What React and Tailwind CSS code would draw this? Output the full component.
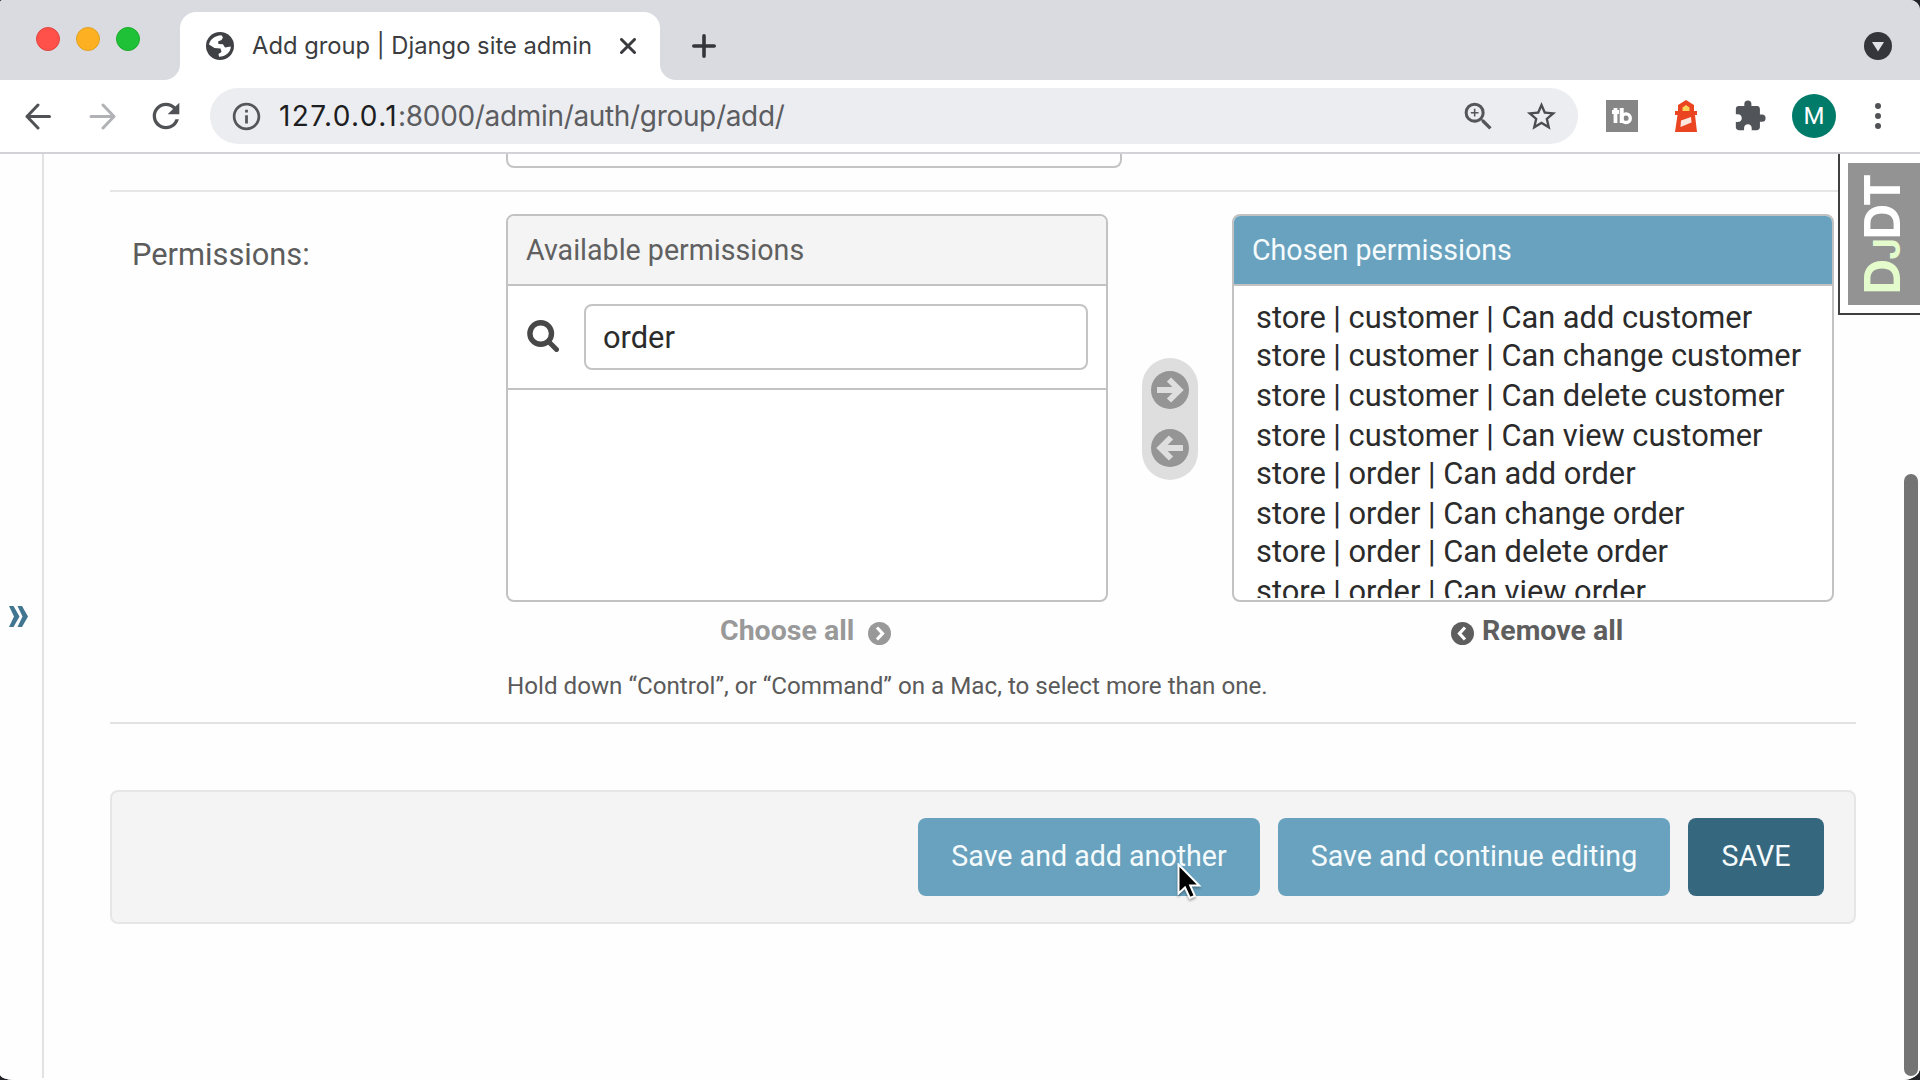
import React from 'react';
import { MdRefresh, MdInfoOutline, MdZoomIn, MdStarBorder, MdExtension } from 'react-icons/md';

const CHOSEN = [
  ['store | customer | Can add customer', 'h-[38px]'],
  ['store | customer | Can change customer', 'h-[40px]'],
  ['store | customer | Can delete customer', 'h-[40px]'],
  ['store | customer | Can view customer', 'h-[38px]'],
  ['store | order | Can add order', 'h-[40px]'],
  ['store | order | Can change order', 'h-[38px]'],
  ['store | order | Can delete order', 'h-[40px]'],
  ['store | order | Can view order', 'h-[40px]'],
];

function TabStrip() {
  return (
    <div className="flex h-20 shrink-0 items-start bg-[#dadbe0]">
      <div className="flex w-[180px] shrink-0 items-center gap-4 pt-[27px] pl-9">
        <span className="size-6 rounded-full border border-[#e0443e] bg-[#ff5149]" />
        <span className="size-6 rounded-full border border-[#dea123] bg-[#fdb022]" />
        <span className="size-6 rounded-full border border-[#1aab29] bg-[#1fc136]" />
      </div>
      <div className="relative mt-3 flex h-[68px] w-[480px] shrink-0 items-center rounded-t-2xl bg-white pl-[26px] pb-px">
        <span className="absolute bottom-0 -left-4 size-4 bg-[radial-gradient(circle_at_0_0,#dadbe0_15.5px,#fff_16.5px)]" />
        <span className="absolute -right-4 bottom-0 size-4 bg-[radial-gradient(circle_at_100%_0,#dadbe0_15.5px,#fff_16.5px)]" />
        <svg className="size-7 shrink-0" viewBox="0 0 28 28">
          <circle cx="14" cy="14" r="14" fill="#404145" />
          <path
            d="M3 12.500C4 7.500 8.500 3.500 15.500 3.200L17 5.500 15.500 8 12 9.500 12.500 12 17 12.300 19 15.500 24.800 14.500C24.800 20 19.500 24.800 13 24.800L12.500 22 15.500 20 14.500 16.500 8.500 16 3 12.500Z"
            fill="#fff"
          />
        </svg>
        <span className="ml-[18px] w-[340px] shrink-0 whitespace-nowrap font-['Inter',sans-serif] text-[23.75px] leading-8 text-[#3c3d41]">
          Add group | Django site admin
        </span>
        <svg className="ml-[28px] size-4 shrink-0" viewBox="0 0 16 16" fill="none" stroke="#3a3b3f" strokeWidth="3" strokeLinecap="round">
          <path d="M1.5 1.5l13 13M14.5 1.5l-13 13" />
        </svg>
      </div>
      <svg className="mt-[34px] ml-8 size-6 shrink-0" viewBox="0 0 24 24" fill="none" stroke="#35363b" strokeWidth="3.6" strokeLinecap="round">
        <path d="M12 1.8v20.4M1.8 12h20.4" />
      </svg>
      <svg className="mt-8 mr-7 ml-auto size-7 shrink-0" viewBox="0 0 28 28">
        <circle cx="14" cy="14" r="14" fill="#35363b" />
        <path d="M8 10h12l-6 9.5z" fill="#e2e3e7" />
      </svg>
    </div>
  );
}

function Toolbar() {
  return (
    <div className="flex h-[74px] shrink-0 items-center border-b-2 border-[#d2d3d7] bg-white">
      <svg className="ml-[25px] size-[27px] shrink-0" viewBox="0 0 27 27" fill="none" stroke="#515256" strokeWidth="3" strokeLinecap="round" strokeLinejoin="round">
        <path d="M24.5 13.5H3M13 2L2 13.5 13 25" />
      </svg>
      <svg className="ml-[37px] size-[27px] shrink-0" viewBox="0 0 27 27" fill="none" stroke="#b1b2b5" strokeWidth="3" strokeLinecap="round" strokeLinejoin="round">
        <path d="M2 13.5h21.5M14 2l11 11.500L14 25" />
      </svg>
      <MdRefresh className="ml-[30px] size-[40px] shrink-0 text-[#515256]" />
      <div className="ml-[24px] flex h-14 w-[1368px] shrink-0 items-center rounded-full bg-[#ecedf1] pl-5">
        <MdInfoOutline className="size-[33px] shrink-0 text-[#55565a]" />
        <span className="ml-4 whitespace-nowrap font-['Inter',sans-serif] text-[28px] leading-10 text-[#5c5d61]">
          <span className="tracking-[1.4px] text-[#1d1e21]">127.0.0.1</span>
          <span className="tracking-[-0.33px]">:8000/admin/auth/group/add/</span>
        </span>
        <MdZoomIn className="ml-auto size-[37px] text-[#55565a]" />
        <MdStarBorder className="mr-[19px] ml-[27px] size-[35px] text-[#4c4d51]" />
      </div>
      <svg className="ml-7 size-8 shrink-0" viewBox="0 0 32 32">
        <path d="M0 0h32v32H0z" fill="#868686" />
        <path d="M9.500 8v15M6 12h7" stroke="#fff" strokeWidth="3.800" fill="none" />
        <path d="M15.700 8v15" stroke="#fff" strokeWidth="4" />
        <circle cx="20" cy="18.200" r="4.300" fill="none" stroke="#fff" strokeWidth="3.400" />
      </svg>
      <svg className="ml-[37px] h-8 w-[22px] shrink-0" viewBox="0 0 22 32">
        <path d="M11 0l8 5v6h3v4h-2l2 17H0L2.500 15H0v-4h3V5z" fill="#ea4420" />
        <path d="M7.500 11V7.500L11 5l3.500 2.500V11z" fill="#fbd35a" />
        <path d="M6 20.500l10-3.500.5 5.500L5.500 27z" fill="#fde8df" />
      </svg>
      <MdExtension className="ml-[36px] size-[34px] shrink-0 text-[#515459]" />
      <span className="ml-[25px] flex size-11 shrink-0 items-center justify-center rounded-full bg-[#007b6a] font-['Roboto',sans-serif] text-[24px] text-white">
        M
      </span>
      <div className="ml-[39px] flex flex-col gap-1">
        <span className="size-1.5 rounded-full bg-[#515256]" />
        <span className="size-1.5 rounded-full bg-[#515256]" />
        <span className="size-1.5 rounded-full bg-[#515256]" />
      </div>
    </div>
  );
}

function CircleArrow({ flip }) {
  return (
    <svg className={flip ? 'size-[38px] rotate-180' : 'size-[38px]'} viewBox="0 0 38 38">
      <circle cx="19" cy="19" r="19" fill="#959595" />
      <path d="M6 19h22M18 8.500L28.500 19 18 29.500" fill="none" stroke="#dedede" strokeWidth="6" />
    </svg>
  );
}

function CircleChevron({ color, flip }) {
  return (
    <svg className={flip ? 'size-[23px] rotate-180' : 'size-[23px]'} viewBox="0 0 23 23">
      <circle cx="11.500" cy="11.500" r="11.500" fill={color} />
      <path d="M9 5.500l5.500 6L9 17.500" fill="none" stroke="#fff" strokeWidth="3.200" />
    </svg>
  );
}

function AvailableBox() {
  return (
    <div className="w-[602px]">
      <div className="h-[388px] overflow-hidden rounded-lg border-2 border-[#c2c2c2] bg-white">
        <div className="h-[70px] border-b-2 border-[#c2c2c2] bg-[#f4f4f4] pl-[18px] text-[28.6px] leading-[68px] text-[#606060]">
          Available permissions
        </div>
        <div className="flex h-[104px] items-center border-b-2 border-[#c2c2c2] pl-[19px]">
          <svg className="mb-0.5 size-8 shrink-0" viewBox="0 0 32 32" fill="none" stroke="#484848" strokeLinecap="round">
            <circle cx="13.700" cy="13.500" r="10.800" strokeWidth="5.400" />
            <path d="M22 22l7.500 7.500" strokeWidth="5" />
          </svg>
          <div className="ml-[25px] h-[66px] w-[504px] rounded-lg border-2 border-[#c4c4c4] pl-[17px] text-[30.800px] leading-[64px] text-[#2b2b2b]">
            order
          </div>
        </div>
      </div>
      <div className="flex h-14 items-start pt-px pl-[214px] text-[28.500px] font-bold leading-[56px] text-[#999]">
        <span className="w-[148px]">Choose all</span>
        <span className="mt-[19px]">
          <CircleChevron color="#999999" />
        </span>
      </div>
    </div>
  );
}

function ChosenBox() {
  return (
    <div className="w-[602px]">
      <div className="h-[388px] overflow-hidden rounded-lg border-2 border-[#c2c2c2] bg-white">
        <div className="h-[70px] border-b-2 border-[#c2c2c2] bg-[#69a2be] pl-[18px] text-[28.6px] leading-[68px] text-[#f5fbfd]">
          Chosen permissions
        </div>
        <div className="h-[312px] overflow-hidden pt-[12px] pl-[22px] text-[30.800px] leading-10 text-[#2b2b2b]">
          {CHOSEN.map(([text, height]) => (
            <div key={text} className={height + ' whitespace-nowrap'}>
              {text}
            </div>
          ))}
        </div>
      </div>
      <div className="flex h-14 items-start pt-px pl-[219px] text-[28.500px] font-bold leading-[56px] text-[#5e5e5e]">
        <span className="mt-[19px]">
          <CircleChevron color="#5e5e5e" flip />
        </span>
        <span className="ml-2">Remove all</span>
      </div>
    </div>
  );
}

function DebugHandle() {
  return (
    <div className="absolute top-0 right-0 h-[161px] w-[82px] border-b-2 border-l-2 border-[#404040] bg-white pt-[9px] pl-2">
      <div className="flex h-[142px] w-[72px] items-center justify-center bg-[#939393] pl-0.5">
        <div className="-rotate-90 whitespace-nowrap font-['Inter',sans-serif] text-[49.500px] font-bold leading-[50px] tracking-[-1.2px] text-white">
          <span className="text-[#e4fccb]">
            D<span className="text-[37px]">J</span>
          </span>
          DT
        </div>
      </div>
    </div>
  );
}

function Form() {
  return (
    <div className="flex flex-1 flex-col pl-[66px]">
      <div className="ml-[396px] h-[14px] w-[616px] rounded-b-lg border-2 border-t-0 border-[#c4c4c4]" />
      <div className="mt-[22px] h-0.5 w-[1746px] bg-[#e6e6e6]" />
      <div className="mt-[22px] flex w-[1746px]">
        <div className="w-[396px] pl-[22px] text-[30.800px] leading-[82px] text-[#5c5c5c]">Permissions:</div>
        <AvailableBox />
        <div className="mt-36 mr-[34px] ml-[34px] flex h-[122px] w-14 shrink-0 flex-col items-center gap-5 rounded-full bg-[#dedede] pt-[13px]">
          <CircleArrow />
          <CircleArrow flip />
        </div>
        <ChosenBox />
      </div>
      <div className="mt-1 ml-[396px] h-[60px] pl-px text-[24.180px] leading-[49px] text-[#5a5a5a]">
        Hold down “Control”, or “Command” on a Mac, to select more than one.
      </div>
      <div className="h-0.5 w-[1746px] bg-[#e2e2e2]" />
      <div className="mt-[66px] flex h-[134px] w-[1746px] justify-end rounded-lg border-2 border-[#e6e6e6] bg-[#f4f4f4] pt-[26px] pr-[30px] text-[28.600px] leading-[76px] text-[#f5fbfd]">
        <button className="relative h-[78px] w-[342px] rounded-lg bg-[#69a2be] pb-0.5">
          Save and add another
          <svg className="absolute top-[45px] left-[259px] h-[38px] w-7 drop-shadow-[0_2px_1px_rgba(0,0,0,0.3)]" viewBox="0 0 28 38">
            <path d="M1.500 1.500v29l6.500-6 4.800 10.500 5-2.200-4.600-10.300h9z" fill="#000" stroke="#fff" strokeWidth="2" />
          </svg>
        </button>
        <button className="ml-[18px] h-[78px] w-[392px] rounded-lg bg-[#69a2be] pb-0.5">Save and continue editing</button>
        <button className="ml-[18px] h-[78px] w-[136px] rounded-lg bg-[#35677f] pb-0.5">SAVE</button>
      </div>
    </div>
  );
}

export default function App() {
  return (
    <div className="h-[1080px] w-[1920px] overflow-hidden bg-[#222326] font-['Roboto',sans-serif]">
      <div className="flex h-full flex-col overflow-hidden rounded-tl-[3px] rounded-tr-[10px] rounded-br-[18px_12px] rounded-bl-[14px_6px] bg-white">
        <TabStrip />
        <Toolbar />
        <div className="relative flex flex-1 bg-[#fefefe]">
          <div className="mb-0.5 w-11 border-r-2 border-[#e2e2e2] pt-[452px] pl-[9px]">
            <svg className="h-[21px] w-[19px]" viewBox="0 0 19 21" fill="#417690">
              <path d="M0 0h4.500l6 10.500-6 10.500H0l5-10.500zM8.500 0H13l6 10.500L13 21H8.500l5-10.500z" />
            </svg>
          </div>
          <Form />
          <DebugHandle />
          <div className="absolute top-[320px] right-0.5 bottom-1 w-3.5 rounded-full bg-[#747474]" />
        </div>
      </div>
    </div>
  );
}
